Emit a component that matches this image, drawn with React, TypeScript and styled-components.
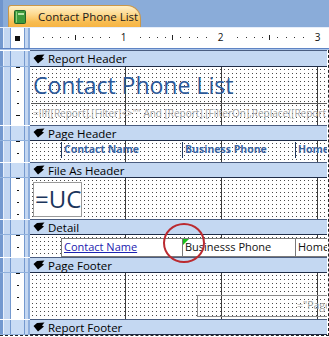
import React from 'react';
import styled, { createGlobalStyle } from 'styled-components';

const Global = createGlobalStyle`
  html, body { margin: 0; padding: 0; background: #ffffff; }
  body { width: 329px; height: 337px; overflow: hidden; font-family: "Open Sans", "Noto Sans", "DejaVu Sans", sans-serif; }
`;

const Window = styled.div`
  position: relative;
  width: 329px;
  height: 337px;
  overflow: hidden;
  display: flex;
  flex-direction: column;
  background: #ffffff;
`;

const TabStrip = styled.div`
  flex: none;
  height: 28px;
  box-sizing: border-box;
  background: linear-gradient(90deg, #6f95cd 0 3px, #8aacd9 3px);
  border-bottom: 1px solid #e6eefa;
  padding-left: 8px;
  display: flex;
  align-items: flex-end;
`;

const Tab = styled.div`
  width: 133px;
  height: 22px;
  box-sizing: border-box;
  background: linear-gradient(#fff0c8, #fdd98e 40%, #f8bd52 75%, #f6b444);
  border: 1px solid #c9974a;
  border-bottom: none;
  border-radius: 3px 14px 0 0;
  display: flex;
  align-items: center;
  gap: 12px;
  padding-left: 5px;
  font-size: 11.5px;
  color: #1b1b1b;
  white-space: nowrap;
`;

const RulerRow = styled.div`
  flex: none;
  height: 20px;
  display: flex;
  background: #ffffff;
`;

const RailBase = `
  flex: none;
  width: 30px;
  box-sizing: border-box;
`;

const railBg = (inner: string) =>
  `linear-gradient(90deg, #7499cf 0 3px, #e8f0fb 3px 4px, #c4d7f1 4px 10px, #7499cf 10px 11px, ${inner} 11px 24px, #7499cf 24px 25px, #c4d7f1 25px 28px, #8eaedc 28px 30px)`;

const Corner = styled.div`
  ${RailBase}
  display: flex;
  align-items: center;
  padding-left: 15px;
  background: ${railBg('#ffffff')};
`;

const CornerMark = styled.span`
  width: 5px;
  height: 5px;
  background: #111;
`;

const Ruler = styled.div`
  flex: 1;
  position: relative;
`;

const Divider = styled.div`
  flex: none;
  height: 2px;
  background: linear-gradient(#5f84c4 0 1px, #a9c3e8 1px);
`;

const Body = styled.div`
  flex: none;
  display: flex;
  flex-direction: column;
  border-right: 1px dashed #222;
  border-bottom: 1px dashed #222;
  padding-right: 1px;
  background: #fff;
`;

const Row = styled.div<{ $h: number }>`
  display: flex;
  height: ${(p) => p.$h}px;
  flex: none;
`;

const BarRail = styled.div`
  ${RailBase}
  background: ${railBg('#c9dcf5')};
  box-shadow: inset 0 1px 0 #ffffff, inset 0 -1px 0 #8fb0dc;
`;

const TickRail = styled.div`
  ${RailBase}
  background:
    linear-gradient(to bottom, transparent 11px, #111 11px) 17px 1px / 2px 12px repeat-y,
    linear-gradient(to bottom, transparent 47px, #111 47px) 16px 1px / 4px 48px repeat-y,
    ${railBg('#ffffff')};
`;

const Bar = styled.div`
  flex: 1;
  box-sizing: border-box;
  display: flex;
  align-items: center;
  gap: 3px;
  padding-left: 3px;
  background: #c4d8f2;
  border-top: 1px solid #4a5d80;
  border-bottom: 1px solid #1f2d48;
  font-size: 11.5px;
  color: #000;
  white-space: nowrap;
`;

const Canvas = styled.div`
  flex: 1;
  position: relative;
  overflow: hidden;
  background-color: #ffffff;
  background-image:
    linear-gradient(90deg, transparent 95px, #3c3c3c 95px 96px, transparent 96px),
    conic-gradient(at 1px 1px, transparent 75%, #4a4a4a 0);
  background-size: 96px 100%, 4px 4px;
  background-position: 0 0, 2px 2px;
  background-repeat: repeat-x, repeat;
`;

const HeaderStack = styled.div`
  display: flex;
  flex-direction: column;
  padding-top: 2px;
  padding-left: 1px;
`;

const Title = styled.div`
  height: 34px;
  box-sizing: border-box;
  padding-left: 2px;
  font-size: 23px;
  line-height: 32px;
  color: #2b5898;
  white-space: nowrap;
`;

const Formula = styled.div`
  height: 22px;
  box-sizing: border-box;
  border-top: 1px solid #5a5a5a;
  padding-left: 2px;
  font-size: 10px;
  line-height: 19px;
  color: #a6a6a6;
  white-space: nowrap;
  overflow: hidden;
`;

const FieldRow = styled.div<{ $top: number }>`
  display: flex;
  padding-left: 31px;
  padding-top: ${(p) => p.$top}px;
`;

const HeadLabel = styled.div<{ $w: number }>`
  position: relative;
  width: ${(p) => p.$w}px;
  height: 16px;
  box-sizing: border-box;
  border-left: 1px solid #22395f;
  padding-left: 2px;
  font-size: 10.5px;
  font-weight: 700;
  line-height: 15px;
  color: #3a64a2;
  white-space: nowrap;
  overflow: hidden;
  flex: none;
`;

const Field = styled.div<{ $w: number; $link?: boolean }>`
  position: relative;
  width: ${(p) => p.$w}px;
  height: 19px;
  box-sizing: border-box;
  border: 1px solid #7a7a7a;
  margin-right: -1px;
  background: #ffffff;
  padding-left: 2px;
  font-size: 11px;
  line-height: 16px;
  color: ${(p) => (p.$link ? '#1a22b0' : '#111')};
  text-decoration: ${(p) => (p.$link ? 'underline' : 'none')};
  white-space: nowrap;
  overflow: hidden;
  flex: none;
`;

const ErrorFlag = styled.span`
  position: absolute;
  left: 0;
  top: 0;
  width: 0;
  height: 0;
  border-top: 6px solid #19c21c;
  border-right: 6px solid transparent;
`;

const BigBoxWrap = styled.div`
  padding: 4px 0 0 3px;
`;

const BigBox = styled.div`
  width: 49px;
  height: 35px;
  box-sizing: border-box;
  border: 1px solid #9a9a9a;
  background: #ffffff;
  overflow: hidden;
  white-space: nowrap;
  padding-left: 1px;
  font-size: 24px;
  line-height: 32px;
  color: #1b355c;
`;

const FooterBoxWrap = styled.div`
  padding: 22px 0 0 167px;
`;

const FooterBox = styled.div`
  height: 22px;
  box-sizing: border-box;
  border: 1px solid #8c8c8c;
  border-right: none;
  padding-left: 99px;
  font-size: 10.5px;
  line-height: 19px;
  color: #a2a2a2;
  white-space: nowrap;
  overflow: hidden;
`;

const Marker = styled.div`
  position: absolute;
  left: 163px;
  top: 223px;
  width: 42px;
  height: 40px;
  box-sizing: border-box;
  border: 2px solid #bb2a30;
  border-radius: 50%;
  pointer-events: none;
`;

const SectionIcon = () => (
  <svg width="12" height="10" viewBox="0 0 12 10">
    <path d="M0.5 4 L4 1 L11.5 0.5 L9 3.5 L11 4.5 L5 9.5 Z" fill="#000" />
  </svg>
);

const ReportIcon = () => (
  <svg width="12" height="14" viewBox="0 0 12 14">
    <rect x="0.5" y="0.5" width="11" height="13" rx="1" fill="#3e9a3c" stroke="#23632a" />
    <rect x="2" y="1.5" width="1" height="11" fill="#8fd07f" />
    <rect x="4" y="3" width="6" height="2" fill="#b7e4a6" />
  </svg>
);

const RulerDrawing = () => {
  const starts = [-4, 93, 190, 287];
  const dots = [17, 26, 34, 42, 57, 66, 74, 83];
  const marks: React.ReactNode[] = [];
  starts.forEach((s, i) => {
    dots.forEach((d) => marks.push(<rect key={`d${i}-${d}`} x={s + d} y={9} width={1} height={1} fill="#333" />));
    marks.push(<rect key={`t${i}`} x={s + 49} y={7} width={1} height={5} fill="#222" />);
  });
  const nums = [
    { x: 93, t: '1' },
    { x: 190, t: '2' },
    { x: 287, t: '3' },
  ];
  return (
    <svg width="299" height="20" viewBox="0 0 299 20">
      {marks}
      {nums.map((n) => (
        <text key={n.t} x={n.x + 0.5} y={13} fontSize="10" textAnchor="middle" fill="#111" fontFamily="Open Sans, sans-serif">
          {n.t}
        </text>
      ))}
    </svg>
  );
};

const SectionBar = ({ label, h = 16 }: { label: string; h?: number }) => (
  <Row $h={h}>
    <BarRail />
    <Bar>
      <SectionIcon />
      {label}
    </Bar>
  </Row>
);

export default function App() {
  return (
    <>
      <Global />
      <Window>
        <TabStrip>
          <Tab>
            <ReportIcon />
            Contact Phone List
          </Tab>
        </TabStrip>
        <RulerRow>
          <Corner>
            <CornerMark />
          </Corner>
          <Ruler>
            <RulerDrawing />
          </Ruler>
        </RulerRow>
        <Divider />
        <Body>
          <SectionBar label="Report Header" h={17} />
          <Row $h={58}>
            <TickRail />
            <Canvas>
              <HeaderStack>
                <Title>Contact Phone List</Title>
                <Formula>=IIf([Report].[Filter]&lt;&gt;"" And [Report].[FilterOn],Replace([Report].[Filter],"[","")</Formula>
              </HeaderStack>
            </Canvas>
          </Row>
          <SectionBar label="Page Header" />
          <Row $h={21}>
            <TickRail />
            <Canvas>
              <FieldRow $top={1}>
                <HeadLabel $w={121}>Contact Name</HeadLabel>
                <HeadLabel $w={113}>Business Phone</HeadLabel>
                <HeadLabel $w={40}>Home Phone</HeadLabel>
              </FieldRow>
            </Canvas>
          </Row>
          <SectionBar label="File As Header" />
          <Row $h={41}>
            <TickRail />
            <Canvas>
              <BigBoxWrap>
                <BigBox>=UCase(Left([File As],1))</BigBox>
              </BigBoxWrap>
            </Canvas>
          </Row>
          <SectionBar label="Detail" />
          <Row $h={22}>
            <TickRail />
            <Canvas>
              <FieldRow $top={3}>
                <Field $w={122} $link>Contact Name</Field>
                <Field $w={114}>
                  <ErrorFlag />
                  Businesss Phone
                </Field>
                <Field $w={40}>Home Phone</Field>
              </FieldRow>
            </Canvas>
          </Row>
          <SectionBar label="Page Footer" />
          <Row $h={46}>
            <TickRail />
            <Canvas>
              <FooterBoxWrap>
                <FooterBox>="Page " &amp; [Page] &amp; " of " &amp; [Pages]</FooterBox>
              </FooterBoxWrap>
            </Canvas>
          </Row>
          <SectionBar label="Report Footer" />
        </Body>
        <Marker />
      </Window>
    </>
  );
}
